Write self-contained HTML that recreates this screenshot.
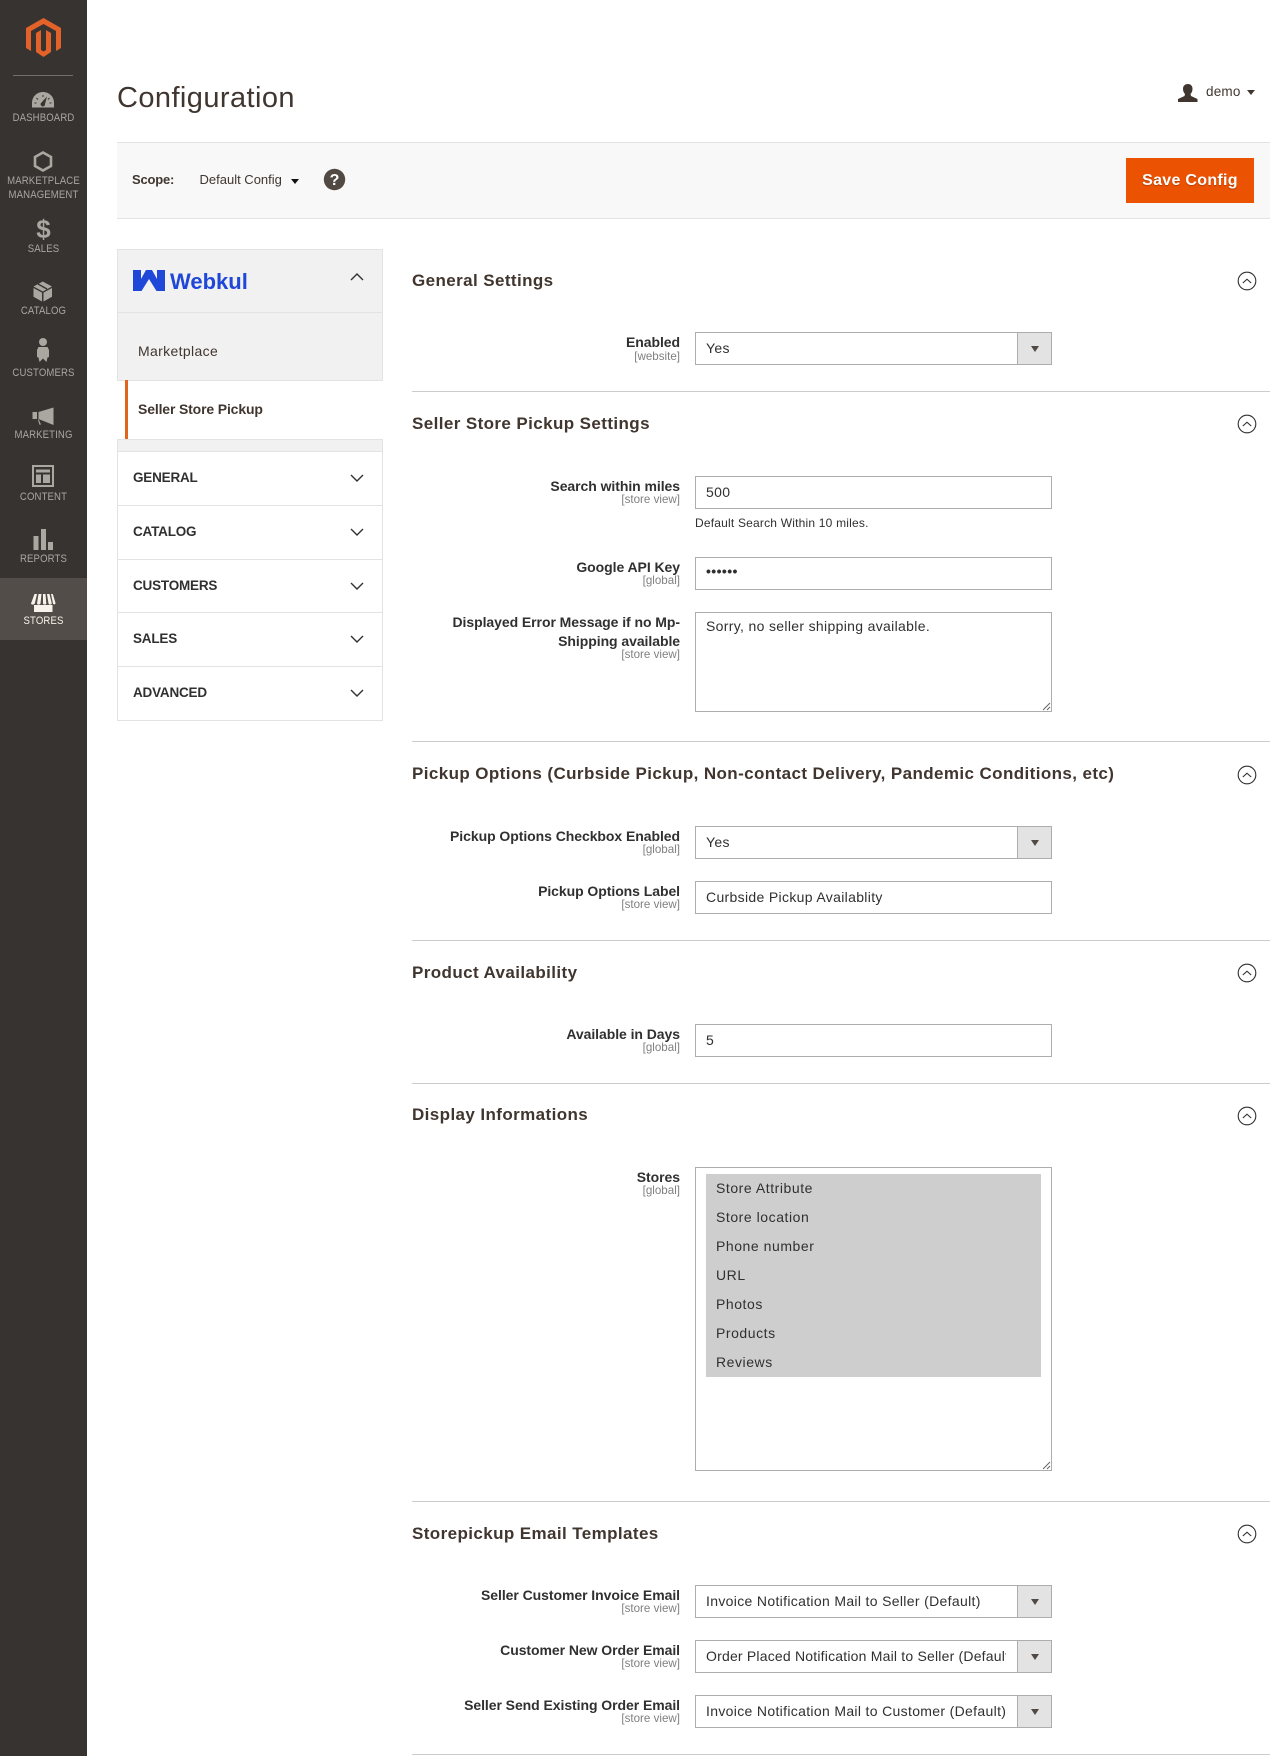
<!DOCTYPE html>
<html lang="en"><head><meta charset="utf-8"><title>Configuration</title>
<style>
*{box-sizing:border-box}
html,body{margin:0;padding:0;background:#fff}
body{position:relative;width:1285px;height:1756px;overflow:hidden;font-family:"Liberation Sans",Arial,sans-serif;color:#303030;font-size:14px}
.a{position:absolute}
.t{position:absolute;line-height:20px;height:20px;white-space:nowrap}
.nav{position:absolute;left:0;width:87px;text-align:center;color:#aaa6a0;font-size:11px;line-height:14px;letter-spacing:.15px;transform:scaleX(.87)}
.h{position:absolute;left:412px;line-height:24px;height:24px;font-size:17px;font-weight:bold;color:#41362f;letter-spacing:.4px;white-space:nowrap}
.l{position:absolute;right:605px;line-height:20px;height:20px;font-weight:bold;font-size:14px;letter-spacing:-.06px;color:#303030;white-space:nowrap;text-align:right}
.s{position:absolute;right:605px;line-height:14px;height:14px;font-size:11.6px;color:#808080;white-space:nowrap}
.f{position:absolute;left:695px;width:357px;height:33px;border:1px solid #adadad;background:#fff;font-size:14px;line-height:31px;padding-left:10px;letter-spacing:.33px;color:#303030;white-space:nowrap;overflow:hidden}
.f.sel{padding-right:0}
.f .clip{display:block;width:302px;overflow:hidden}
.f .ad{position:absolute;right:0;top:0;width:34px;height:31px;background:#e3e3e3;border-left:1px solid #adadad}
.f .ad:after{content:"";position:absolute;left:13px;top:13px;border:4px solid transparent;border-top:6px solid #514943;border-bottom:0}
.hr{position:absolute;left:412px;width:858px;height:1px;background:#cccccc}
.mt{position:absolute;left:133px;font-weight:bold;font-size:13.5px;letter-spacing:-.2px;line-height:20px;color:#303030}
.o{position:absolute;left:716px;line-height:20px;height:20px;font-size:14px;letter-spacing:.55px;color:#303030}
</style></head>
<body>
<!-- Sidebar -->
<div class="a" style="left:0;top:0;width:87px;height:1756px;background:#373330"></div>
<div class="a" style="left:0;top:578px;width:87px;height:62px;background:#524d49"></div>
<div class="a" style="left:13px;top:75px;width:60px;height:1px;background:#736e69"></div>
<svg class="a" style="left:0;top:0" width="87" height="640" viewBox="0 0 87 640">
<path fill="#e2622a" d="M43.5 18L61 28V48L56 51V31L43.5 24 31 31V51L26 48V28Z"/>
<path fill="#e2622a" d="M46 30L51 33V52L43.5 57 36 52V33L41 30V50L43.5 51.5 46 50Z"/>
<path fill="#aaa6a0" d="M32 107.500V103C32 96.500 37 92 43 92S54 96.500 54 103V107.500Z"/>
<path stroke="#373330" stroke-width="1" d="M43 95v2M36.500 98l1.500 1.500M49.500 98l-1.500 1.500M34.500 103h2M51.500 103h-2"/>
<path fill="#373330" d="M47 96.500L45 104a2.200 2.200 0 1 1-3.500-1.500Z"/>
<path fill="none" stroke="#aaa6a0" stroke-width="2.600" d="M43 152.500L51 157V166L43 170.500 35 166V157Z"/>
<path fill="#aaa6a0" d="M42.800 281.500L52 286.500 42.800 291.500 33.500 286.500ZM33.500 288L42 292.600V301.500L33.500 296.800ZM52 288V296.800L43.500 301.500V292.600Z"/>
<path stroke="#373330" stroke-width="1.400" d="M38 284L47 289"/>
<circle cx="43" cy="342" r="4" fill="#aaa6a0"/>
<path fill="#aaa6a0" d="M38.500 347H47.500L49 350V357L47.500 357.500 46.500 362 43 358.500 39.500 362 38.500 357.500 37 357V350Z"/>
<path fill="#aaa6a0" d="M32.500 412H37V419H32.500ZM38.500 412L53.500 407.500V425L38.500 419 41 424.500 39.500 424.800 38 420 38.500 419Z"/>
<path fill="none" stroke="#aaa6a0" stroke-width="2" d="M33 466H53V486H33Z"/>
<path fill="#aaa6a0" d="M36 469.500H50V472.500H36ZM36 474.500H41V483H36ZM43 474.500H50V483H43Z"/>
<path fill="#aaa6a0" d="M33.500 536H38.500V550H33.500ZM41 529H46V550H41ZM48 542H53V550H48Z"/>
<path fill="#f7f3eb" d="M34 605V612H52.500V605Z"/>
<path fill="#f7f3eb" d="M34.500 594L31 603.500C31.500 605 33.800 605 34.800 603.500L37 594ZM38.500 594L37 603.500C37.500 605 39.800 605 40.500 603.500L41.500 594ZM43 594V603.500C43.500 605 46 605 46.300 603.500L45.500 594ZM47 594L48.500 603.500C49 605 51 605 51.800 603.500L49.500 594ZM51 594L53 603.500C53.800 605 55.500 604.500 55.500 603L52.800 594Z"/>
</svg>
<div class="nav" style="top:111px">DASHBOARD</div>
<div class="nav" style="top:174px">MARKETPLACE<br>MANAGEMENT</div>
<div class="a" style="left:0;top:217px;width:87px;text-align:center;color:#aaa6a0;font-weight:bold;font-size:26px;line-height:24px">$</div>
<div class="nav" style="top:242px">SALES</div>
<div class="nav" style="top:304px">CATALOG</div>
<div class="nav" style="top:366px">CUSTOMERS</div>
<div class="nav" style="top:428px">MARKETING</div>
<div class="nav" style="top:490px">CONTENT</div>
<div class="nav" style="top:552px">REPORTS</div>
<div class="nav" style="top:614px;color:#f7f3eb">STORES</div>

<!-- Header -->
<div class="t" style="left:117px;top:80px;height:36px;line-height:36px;font-size:29px;color:#41362f;letter-spacing:.42px">Configuration</div>
<svg class="a" style="left:1177px;top:83px" width="22" height="19" viewBox="0 0 22 19"><path fill="#41362f" d="M11 1c3 0 4.500 2.200 4.500 5 0 2.200-1 4-2 5l.5 2 6.500 3V19H1v-3l6.500-3 .5-2c-1-1-2-2.800-2-5 0-2.800 1.500-5 5-5z"/></svg>
<div class="t" style="left:1206px;top:82px;font-size:13.500px;color:#41362f;letter-spacing:.2px">demo</div>
<div class="a" style="left:1247px;top:90px;border:4px solid transparent;border-top:5px solid #41362f;border-bottom:0"></div>

<!-- Scope bar -->
<div class="a" style="left:117px;top:142px;width:1153px;height:77px;background:#f8f8f8;border-top:1px solid #e3e3e3;border-bottom:1px solid #e3e3e3"></div>
<div class="t" style="left:132px;top:170px;font-weight:bold;font-size:13px;letter-spacing:-.2px;color:#41362f">Scope:</div>
<div class="t" style="left:199.500px;top:170px;font-size:13px;letter-spacing:0;color:#41362f">Default Config</div>
<div class="a" style="left:291px;top:179px;border:4px solid transparent;border-top:5px solid #111;border-bottom:0"></div>
<svg class="a" style="left:323px;top:168px" width="23" height="23" viewBox="0 0 23 23"><circle cx="11.500" cy="11.500" r="10.700" fill="#514943"/><text x="11.500" y="17" text-anchor="middle" font-family="Liberation Sans" font-weight="bold" font-size="16" fill="#fff">?</text></svg>
<div class="a" style="left:1126px;top:158px;width:128px;height:45px;background:#eb5202;color:#fff;font-weight:bold;font-size:16px;letter-spacing:.3px;line-height:45px;text-align:center;text-shadow:0 1px 1px rgba(0,0,0,.25)">Save Config</div>

<!-- Left nav -->
<div class="a" style="left:117px;top:249px;width:266px;height:132px;background:#f1f1f1;border:1px solid #e3e3e3"></div>
<div class="a" style="left:118px;top:312px;width:264px;height:1px;background:#e3e3e3"></div>
<svg class="a" style="left:133px;top:270px" width="32" height="21" viewBox="0 0 32 21"><path fill="#1f47d8" d="M0 0H8V9L13 0H19L24 9V0H32V21H23.500L16 9 8.500 21H0Z"/></svg>
<div class="t" style="left:170px;top:270px;height:22px;line-height:23px;font-weight:bold;font-size:22px;color:#1f47d8;letter-spacing:0">Webkul</div>
<svg class="a" style="left:350px;top:272px" width="14" height="9" viewBox="0 0 14 9"><path fill="none" stroke="#303030" stroke-width="1.400" d="M1 8l6-6 6 6"/></svg>
<div class="t" style="left:138px;top:341px;font-size:14px;letter-spacing:.35px;color:#41362f">Marketplace</div>
<div class="a" style="left:125px;top:381px;width:258px;height:58px;background:#fff"></div>
<div class="a" style="left:125px;top:380px;width:3px;height:59px;background:#e0661e"></div>
<div class="a" style="left:117px;top:381px;width:8px;height:58px;background:#fff"></div>
<div class="a" style="left:117px;top:439px;width:266px;height:12px;background:#f1f1f1;border:1px solid #e3e3e3;border-bottom:0"></div>
<div class="t" style="left:138px;top:399px;font-weight:bold;font-size:14px;letter-spacing:-.15px;color:#41362f">Seller Store Pickup</div>

<div class="a" style="left:117px;top:451px;width:266px;height:270px;border:1px solid #e3e3e3"></div>
<div class="a" style="left:118px;top:505px;width:264px;height:1px;background:#e3e3e3"></div>
<div class="a" style="left:118px;top:559px;width:264px;height:1px;background:#e3e3e3"></div>
<div class="a" style="left:118px;top:612px;width:264px;height:1px;background:#e3e3e3"></div>
<div class="a" style="left:118px;top:666px;width:264px;height:1px;background:#e3e3e3"></div>
<div class="mt" style="top:468px">GENERAL</div>
<div class="mt" style="top:522px">CATALOG</div>
<div class="mt" style="top:576px">CUSTOMERS</div>
<div class="mt" style="top:629px">SALES</div>
<div class="mt" style="top:683px">ADVANCED</div>
<svg class="a" style="left:350px;top:474px" width="14" height="230" viewBox="0 0 14 230"><g fill="none" stroke="#303030" stroke-width="1.400"><path d="M1 1l6 6 6-6"/><path d="M1 55l6 6 6-6"/><path d="M1 109l6 6 6-6"/><path d="M1 162l6 6 6-6"/><path d="M1 216l6 6 6-6"/></g></svg>

<!-- Section chevrons -->
<svg class="a" style="left:1235.500px;top:270px" width="22" height="1275" viewBox="0 0 22 1275">
<defs><g id="c"><circle cx="11" cy="0" r="8.800" fill="none" stroke="#303030" stroke-width="1.100"/><path d="M6.800 2l4.200-3.800L15.200 2" fill="none" stroke="#303030" stroke-width="1.100"/></g></defs>
<use href="#c" y="11"/><use href="#c" y="154"/><use href="#c" y="505"/><use href="#c" y="703"/><use href="#c" y="846"/><use href="#c" y="1264"/>
</svg>

<!-- General Settings -->
<div class="h" style="top:268.500px">General Settings</div>
<div class="l" style="top:332px">Enabled</div><div class="s" style="top:350px">[website]</div>
<div class="f sel" style="top:332px">Yes<span class="ad"></span></div>
<div class="hr" style="top:391px"></div>

<!-- Seller Store Pickup -->
<div class="h" style="top:411.500px">Seller Store Pickup Settings</div>
<div class="l" style="top:476px">Search within miles</div><div class="s" style="top:493px">[store view]</div>
<div class="f" style="top:476px">500</div>
<div class="t" style="left:695px;top:513px;font-size:12px;letter-spacing:.2px;color:#303030">Default Search Within 10 miles.</div>
<div class="l" style="top:557px">Google API Key</div><div class="s" style="top:574px">[global]</div>
<div class="f" style="top:557px"><span style="position:relative;top:-2px;font-size:14px;letter-spacing:.4px;font-weight:bold">••••••</span></div>
<div class="l" style="top:612px">Displayed Error Message if no Mp-</div>
<div class="l" style="top:631px">Shipping available</div><div class="s" style="top:648px">[store view]</div>
<div class="f" style="top:612px;height:100px;line-height:27px">Sorry, no seller shipping available.
<svg class="a" style="right:0;bottom:0" width="10" height="10" viewBox="0 0 10 10"><path d="M9 2L2 9M9 6L6 9" stroke="#666" stroke-width="1"/></svg></div>
<div class="hr" style="top:741px"></div>

<!-- Pickup Options -->
<div class="h" style="top:762px">Pickup Options (Curbside Pickup, Non-contact Delivery, Pandemic Conditions, etc)</div>
<div class="l" style="top:826px">Pickup Options Checkbox Enabled</div><div class="s" style="top:843px">[global]</div>
<div class="f sel" style="top:826px">Yes<span class="ad"></span></div>
<div class="l" style="top:881px">Pickup Options Label</div><div class="s" style="top:898px">[store view]</div>
<div class="f" style="top:881px">Curbside Pickup Availablity</div>
<div class="hr" style="top:940px"></div>

<!-- Product Availability -->
<div class="h" style="top:960.500px">Product Availability</div>
<div class="l" style="top:1024px">Available in Days</div><div class="s" style="top:1041px">[global]</div>
<div class="f" style="top:1024px">5</div>
<div class="hr" style="top:1083px"></div>

<!-- Display Informations -->
<div class="h" style="top:1103px">Display Informations</div>
<div class="l" style="top:1167px">Stores</div><div class="s" style="top:1184px">[global]</div>
<div class="a" style="left:695px;top:1167px;width:357px;height:304px;border:1px solid #adadad;background:#fff"></div>
<div class="a" style="left:706px;top:1174px;width:335px;height:203px;background:#cecece"></div>
<div class="o" style="top:1178px">Store Attribute</div>
<div class="o" style="top:1207px">Store location</div>
<div class="o" style="top:1236px">Phone number</div>
<div class="o" style="top:1265px">URL</div>
<div class="o" style="top:1294px">Photos</div>
<div class="o" style="top:1323px">Products</div>
<div class="o" style="top:1352px">Reviews</div>
<svg class="a" style="left:1041px;top:1460px" width="10" height="10" viewBox="0 0 10 10"><path d="M9 2L2 9M9 6L6 9" stroke="#666" stroke-width="1"/></svg>
<div class="hr" style="top:1501px"></div>

<!-- Email Templates -->
<div class="h" style="top:1521.500px">Storepickup Email Templates</div>
<div class="l" style="top:1585px">Seller Customer Invoice Email</div><div class="s" style="top:1602px">[store view]</div>
<div class="f sel" style="top:1585px"><span class="clip">Invoice Notification Mail to Seller (Default)</span><span class="ad"></span></div>
<div class="l" style="top:1640px">Customer New Order Email</div><div class="s" style="top:1657px">[store view]</div>
<div class="f sel" style="top:1640px"><span class="clip" style="letter-spacing:.2px;width:300px">Order Placed Notification Mail to Seller (Default)</span><span class="ad"></span></div>
<div class="l" style="top:1695px">Seller Send Existing Order Email</div><div class="s" style="top:1712px">[store view]</div>
<div class="f sel" style="top:1695px"><span class="clip">Invoice Notification Mail to Customer (Default)</span><span class="ad"></span></div>
<div class="hr" style="top:1754px"></div>
</body></html>
